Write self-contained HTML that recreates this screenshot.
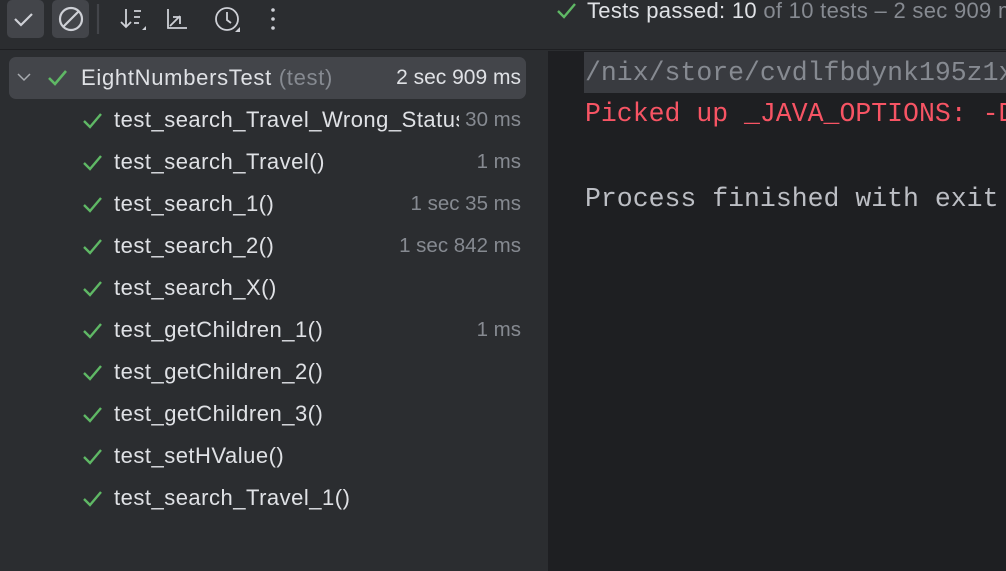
<!DOCTYPE html>
<html><head><style>
*{margin:0;padding:0;box-sizing:border-box}
body{width:1006px;height:571px;overflow:hidden;background:#2b2d30;font-family:"Liberation Sans",sans-serif;position:relative}
.abs{position:absolute}
.tb{top:0;left:0;width:1006px;height:50px;background:#2b2d30;border-bottom:1px solid #1e1f22}
.btn{top:0;width:37px;height:38px;background:#43454a;border-radius:5px}
.left{top:51px;left:0;width:547px;height:520px;background:#2b2d30;overflow:hidden}
.right{top:51px;left:548px;width:458px;height:520px;background:#1e1f22}
.row{position:absolute;left:0;width:547px;height:42px;font-size:22px;letter-spacing:0.5px;color:#dfe1e5;line-height:42px;white-space:nowrap}
.row .ck{position:absolute;left:82px;top:12px}
.row .n{position:absolute;left:114px}
.row .t{position:absolute;right:26px;color:#868a91;font-size:20.5px;letter-spacing:0;background:#2b2d30;padding-left:6px}
.mono{font-family:"Liberation Mono",monospace;font-size:26.5px;position:absolute;left:585px;white-space:nowrap}
</style></head><body>
<div class="abs tb"></div>
<div class="abs btn" style="left:7px"></div>
<div class="abs btn" style="left:52px"></div>
<svg class="abs" style="left:0;top:0" width="300" height="50" fill="none" stroke="#ced0d6" stroke-width="2.2">
<path d="M15 19l6 6 11-11"/>
<circle cx="71" cy="19" r="11"/><path d="M63 27l16-16"/>
<line x1="98" y1="4" x2="98" y2="34" stroke="#43454a"/>
<path d="M126 9v18M121 22l5 5 5-5M134 11h7M134 17h6M134 23h5" stroke-width="1.8"/>
<path d="M142 30l4-4v4z" fill="#ced0d6" stroke="none"/>
<path d="M168 9v19h19M170 26l10-10M173 17h7v7" stroke-width="1.8"/>
<circle cx="227" cy="19" r="11" stroke-width="1.8"/><path d="M227 12v8l4 3" stroke-width="1.8"/>
<path d="M235 32l5-5v5z" fill="#ced0d6" stroke="none"/>
<circle cx="273" cy="10" r="1.8" fill="#ced0d6" stroke="none"/><circle cx="273" cy="19" r="1.8" fill="#ced0d6" stroke="none"/><circle cx="273" cy="28" r="1.8" fill="#ced0d6" stroke="none"/>
</svg>
<svg class="abs" style="left:556px;top:1px" width="22" height="20" fill="none" stroke="#5fb865" stroke-width="2.4"><path d="M2 10l6 6 11-13"/></svg>
<div class="abs" style="left:587px;top:-2px;font-size:22px;letter-spacing:0.3px;color:#dfe1e5;white-space:nowrap">Tests passed: 10 <span style="color:#868a91">of 10 tests – 2 sec 909 ms</span></div>
<div class="abs left"></div>
<div class="abs right"></div>
<div class="abs" style="left:9px;top:57px;width:517px;height:42px;background:#43454a;border-radius:7px"></div>
<svg class="abs" style="left:16px;top:71px" width="16" height="12" fill="none" stroke="#a8abb0" stroke-width="1.5"><path d="M2 3l6 6 6-6"/></svg>
<svg class="abs" style="left:47px;top:68px" width="22" height="20" fill="none" stroke="#5fb865" stroke-width="2.6"><path d="M2 10l6 6 11-13"/></svg>
<div class="abs" style="left:81px;top:57px;line-height:42px;font-size:22px;letter-spacing:0.7px;color:#dfe1e5;white-space:nowrap">EightNumbersTest <span style="color:#868a91">(test)</span></div>
<div class="abs" style="right:485px;top:57px;line-height:42px;font-size:21px;color:#dfe1e5">2 sec 909 ms</div>
<div class="abs" style="top:99px;left:0;width:547px;height:430px;overflow:hidden">
<div class="row" style="top:0"><svg class="ck" width="22" height="20" fill="none" stroke="#5fb865" stroke-width="2.4"><path d="M2 10l6 6 11-13"/></svg><span class="n">test_search_Travel_Wrong_Status()</span><span class="t">30 ms</span></div>
<div class="row" style="top:42px"><svg class="ck" width="22" height="20" fill="none" stroke="#5fb865" stroke-width="2.4"><path d="M2 10l6 6 11-13"/></svg><span class="n">test_search_Travel()</span><span class="t">1 ms</span></div>
<div class="row" style="top:84px"><svg class="ck" width="22" height="20" fill="none" stroke="#5fb865" stroke-width="2.4"><path d="M2 10l6 6 11-13"/></svg><span class="n">test_search_1()</span><span class="t">1 sec 35 ms</span></div>
<div class="row" style="top:126px"><svg class="ck" width="22" height="20" fill="none" stroke="#5fb865" stroke-width="2.4"><path d="M2 10l6 6 11-13"/></svg><span class="n">test_search_2()</span><span class="t">1 sec 842 ms</span></div>
<div class="row" style="top:168px"><svg class="ck" width="22" height="20" fill="none" stroke="#5fb865" stroke-width="2.4"><path d="M2 10l6 6 11-13"/></svg><span class="n">test_search_X()</span></div>
<div class="row" style="top:210px"><svg class="ck" width="22" height="20" fill="none" stroke="#5fb865" stroke-width="2.4"><path d="M2 10l6 6 11-13"/></svg><span class="n">test_getChildren_1()</span><span class="t">1 ms</span></div>
<div class="row" style="top:252px"><svg class="ck" width="22" height="20" fill="none" stroke="#5fb865" stroke-width="2.4"><path d="M2 10l6 6 11-13"/></svg><span class="n">test_getChildren_2()</span></div>
<div class="row" style="top:294px"><svg class="ck" width="22" height="20" fill="none" stroke="#5fb865" stroke-width="2.4"><path d="M2 10l6 6 11-13"/></svg><span class="n">test_getChildren_3()</span></div>
<div class="row" style="top:336px"><svg class="ck" width="22" height="20" fill="none" stroke="#5fb865" stroke-width="2.4"><path d="M2 10l6 6 11-13"/></svg><span class="n">test_setHValue()</span></div>
<div class="row" style="top:378px"><svg class="ck" width="22" height="20" fill="none" stroke="#5fb865" stroke-width="2.4"><path d="M2 10l6 6 11-13"/></svg><span class="n">test_search_Travel_1()</span></div>
</div>
<div class="abs" style="left:584px;top:52px;width:422px;height:41px;background:#393b40"></div>
<div class="abs" style="left:548px;top:51px;width:458px;height:520px;overflow:hidden">
<div class="mono" style="left:37px;top:7px;color:#868a91">/nix/store/cvdlfbdynk195z1x</div>
<div class="mono" style="left:37px;top:48px;color:#f75464">Picked up _JAVA_OPTIONS: -Djava</div>
<div class="mono" style="left:37px;top:133px;color:#bcbec4">Process finished with exit code 0</div>
</div>
</body></html>
